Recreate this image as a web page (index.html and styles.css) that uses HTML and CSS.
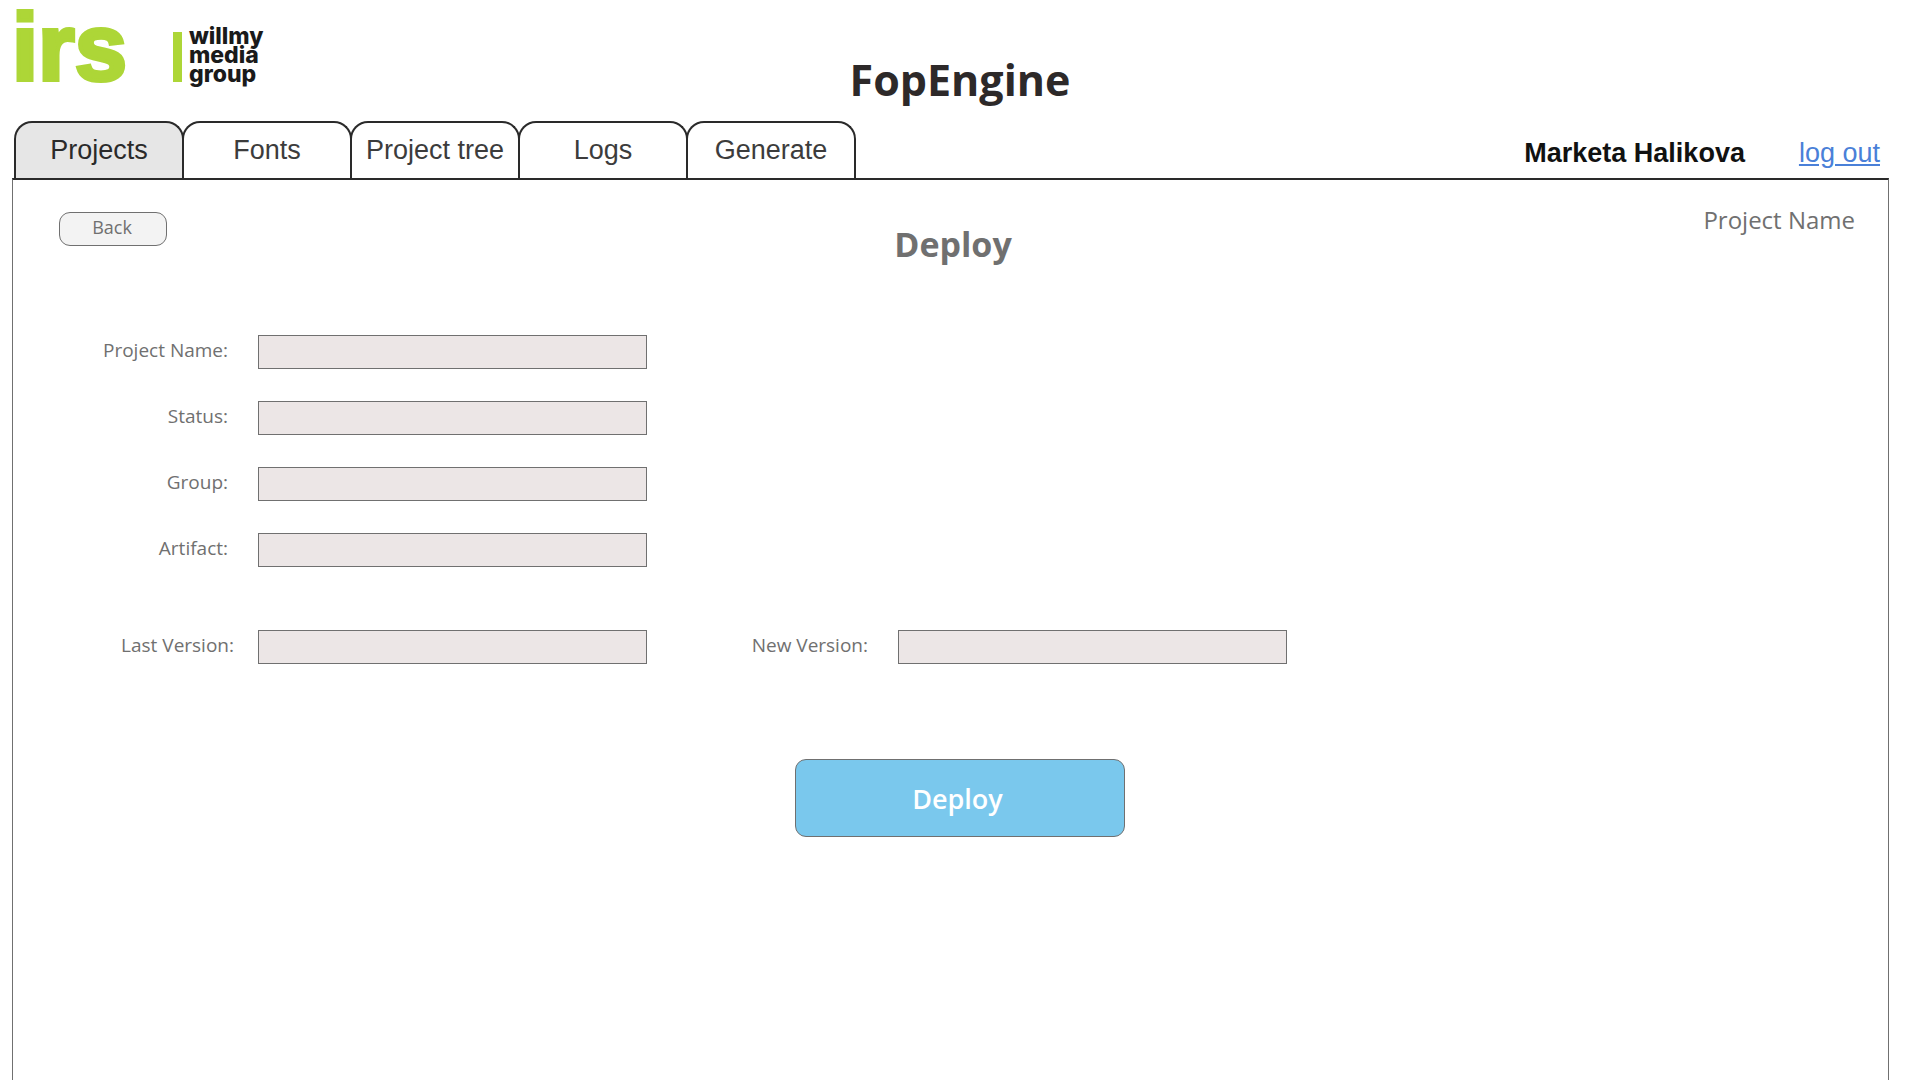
FILE: index.html
```html
<!DOCTYPE html>
<html lang="en">
<head>
  <meta charset="utf-8">
  <meta name="viewport" content="width=device-width, initial-scale=1">
  <title>FopEngine – Deploy</title>
  <link rel="stylesheet" href="styles.css">
</head>
<body>
  <header class="masthead">
    <div class="brand">
      <span class="brand-irs">irs</span>
      <span class="brand-group">willmy<br>media<br>group</span>
    </div>
    <h1 class="app-title">FopEngine</h1>
  </header>

  <div class="navbar">
    <nav class="tabs">
      <a class="tab tab-active" href="#projects" aria-current="page">Projects</a>
      <a class="tab" href="#fonts">Fonts</a>
      <a class="tab" href="#tree">Project tree</a>
      <a class="tab" href="#logs">Logs</a>
      <a class="tab" href="#generate">Generate</a>
    </nav>
    <div class="account">
      <span class="account-name">Marketa Halikova</span>
      <a class="logout" href="#logout">log out</a>
    </div>
  </div>

  <main class="panel">
    <div class="panel-head">
      <button class="back" type="button">Back</button>
      <h2 class="panel-title">Deploy</h2>
      <span class="project">Project Name</span>
    </div>

    <form class="form">
      <div class="fields">
        <div class="field">
          <label class="label" for="name">Project Name:</label>
          <input class="input" id="name" type="text">
        </div>
        <div class="field">
          <label class="label" for="status">Status:</label>
          <input class="input" id="status" type="text">
        </div>
        <div class="field">
          <label class="label" for="group">Group:</label>
          <input class="input" id="group" type="text">
        </div>
        <div class="field">
          <label class="label" for="artifact">Artifact:</label>
          <input class="input" id="artifact" type="text">
        </div>
      </div>
      <div class="versions">
        <div class="field">
          <label class="label label-last" for="last">Last Version:</label>
          <input class="input" id="last" type="text">
        </div>
        <div class="field">
          <label class="label label-new" for="new">New Version:</label>
          <input class="input" id="new" type="text">
        </div>
      </div>
      <div class="actions">
        <button class="deploy" type="submit">Deploy</button>
      </div>
    </form>
  </main>
</body>
</html>
```
FILE: styles.css
```css
*,
*::before,
*::after {
  box-sizing: border-box;
}

body {
  display: flex;
  flex-direction: column;
  min-height: 100vh;
  margin: 0;
  background: #fff;
  color: #707070;
  font-family: "Open Sans", "Noto Sans", sans-serif;
  font-size: 18px;
}

h1,
h2 {
  margin: 0;
}

/* Masthead */
.masthead {
  display: grid;
  grid-template-columns: 1fr auto 1fr;
  padding: 0 12px;
}

.brand {
  display: flex;
  align-items: flex-start;
  gap: 46px;
}

.brand-irs {
  color: #add637;
  font-family: "Liberation Sans", Arial, sans-serif;
  font-size: 94px;
  font-weight: 700;
  line-height: 96px;
  -webkit-text-stroke: 4px #add637;
}

.brand-group {
  position: relative;
  margin-top: 27px;
  padding-left: 16px;
  color: #1a1a1a;
  font-family: Inter, "Liberation Sans", sans-serif;
  font-size: 23px;
  font-weight: 800;
  line-height: 19px;
}

.brand-group::before {
  content: "";
  position: absolute;
  left: 0;
  top: 5px;
  width: 9px;
  height: 50px;
  background: #add637;
}

.app-title {
  padding: 50px 0 11px;
  color: #2d2929;
  font-size: 43px;
  font-weight: 700;
  line-height: 60px;
}

/* Tabs and account */
.navbar {
  display: flex;
  justify-content: space-between;
  padding: 0 40px 0 14px;
  font-family: "Liberation Sans", Arial, sans-serif;
  font-size: 27px;
}

.tabs {
  display: flex;
}

.tab {
  width: 170px;
  height: 57px;
  border: 2px solid #2a2a2a;
  border-bottom: 0;
  border-radius: 18px 18px 0 0;
  color: #3c3c3c;
  line-height: 54px;
  text-align: center;
  text-decoration: none;
  white-space: nowrap;
}

.tab + .tab {
  margin-left: -2px;
}

.tab-active {
  background: #e6e6e6;
  color: #2a2a2a;
}

.account {
  display: flex;
  gap: 54px;
  line-height: 64px;
  height: 57px;
}

.account-name {
  color: #111;
  font-weight: 700;
}

.logout {
  color: #4a80d8;
}

/* Panel */
.panel {
  flex: 1;
  margin: 0 31px 0 12px;
  border: 1px solid #707070;
  border-top: 2px solid #2a2a2a;
  border-bottom: 0;
}

.panel-head {
  display: grid;
  grid-template-columns: 1fr auto 1fr;
  align-items: start;
  padding: 32px 33px 0 38px;
}

.back {
  width: 108px;
  height: 34px;
  margin-left: 8px;
  padding: 0 2px 4px 0;
  border: 1px solid #707070;
  border-radius: 11px;
  background: #f3f3f3;
  color: #707070;
  font: inherit;
  line-height: 28px;
}

.panel-title {
  padding-top: 8px;
  font-size: 34px;
  font-weight: 700;
  line-height: 48px;
}

.project {
  justify-self: end;
  font-size: 24px;
  line-height: 16px;
}

.form {
  padding: 67px 28px 40px 46px;
}

.fields {
  display: grid;
  gap: 32px;
}

.field {
  display: flex;
}

.label {
  width: 199px;
  padding-right: 30px;
  font-size: 19px;
  line-height: 30px;
  text-align: right;
}

.label-last {
  padding-right: 24px;
}

.label-new {
  width: 251px;
}

.input {
  width: 389px;
  height: 34px;
  padding: 0 8px;
  border: 1px solid #707070;
  background: #ece6e6;
  color: #707070;
  font: inherit;
}

.versions {
  display: flex;
  flex-wrap: wrap;
  margin-top: 63px;
}

.actions {
  display: flex;
  justify-content: center;
  margin-top: 95px;
}

.deploy {
  width: 330px;
  height: 78px;
  padding: 0 4px 0 0;
  border: 1px solid #707070;
  border-radius: 11px;
  background: #7ac8ed;
  color: #fff;
  font: inherit;
  font-size: 27px;
  font-weight: 600;
}
```
